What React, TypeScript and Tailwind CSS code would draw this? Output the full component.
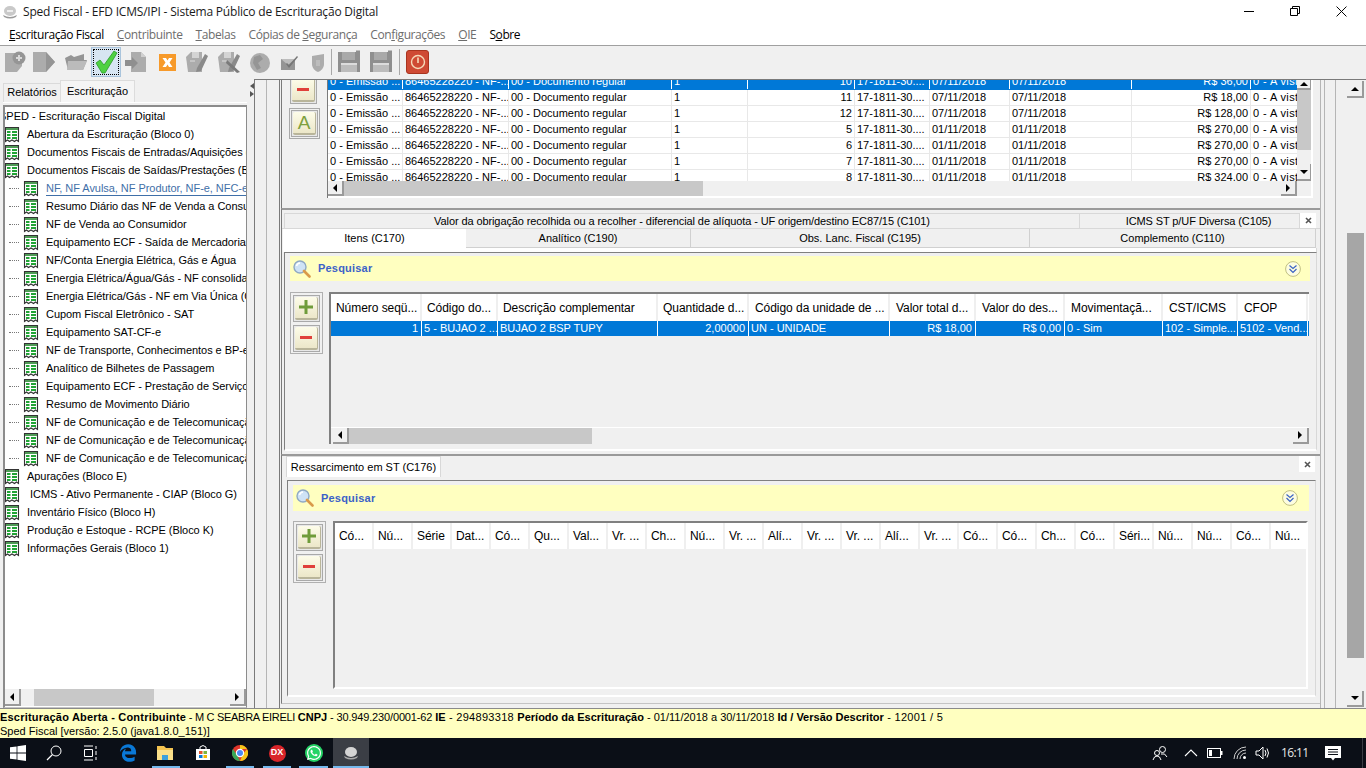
import React from "react";
import { FaEdgeLegacy, FaWhatsapp } from "react-icons/fa6";

const Tri = ({ d }: { d: "l" | "r" | "u" | "d" }) => {
  const p = { l: "M5 0 L5 8 L1 4 Z", r: "M1 0 L1 8 L5 4 Z", u: "M0 5 L8 5 L4 1 Z", d: "M0 1 L8 1 L4 5 Z" }[d];
  const s = d === "l" || d === "r" ? "w-[6px] h-[8px]" : "w-[8px] h-[6px]";
  return (
    <svg viewBox={d === "l" || d === "r" ? "0 0 6 8" : "0 0 8 6"} className={s}>
      <path d={p} fill="#000" />
    </svg>
  );
};

const SBtn = ({ d, cls = "" }: { d: "l" | "r" | "u" | "d"; cls?: string }) => (
  <div className={`flex items-center justify-center bg-[#f0f0f0] border-b-2 border-r-2 border-[#9a9a9a] shrink-0 ${cls}`}>
    <Tri d={d} />
  </div>
);

const HScroll = ({ thumbLeft, thumbW, cls = "" }: { thumbLeft: string; thumbW: string; cls?: string }) => (
  <div className={`flex bg-[#f0f0f0] ${cls}`}>
    <SBtn d="l" cls="w-[16px] h-full" />
    <div className="flex-1 flex">
      <div className={thumbLeft} />
      <div className={`${thumbW} bg-[#c8c8c8]`} />
    </div>
    <SBtn d="r" cls="w-[16px] h-full" />
  </div>
);

const TreeIcon = () => (
  <svg viewBox="0 0 16 17" className="w-[16px] h-[17px] shrink-0">
    <path d="M1.5 1.5 H14.5 V15.5 L12.5 14 L10.5 15.5 L8 14 L5.5 15.5 L3.5 14 L1.5 15.5 Z" fill="#fff" stroke="#333" strokeWidth="1.1" />
    <path d="M2 2 H14 V4 H2 Z" fill="#4f9a56" />
    <path d="M3 5 H6.5 V7 H3 Z M8 5 H13 V7 H8 Z M3 8 H6.5 V10 H3 Z M8 8 H13 V10 H8 Z M3 11 H6.5 V13 H3 Z M8 11 H13 V13 H8 Z" fill="#22a336" />
  </svg>
);

const L1 = ({ t, x = "ml-[7px]" }: { t: string; x?: string }) => (
  <div className="h-[18px] flex items-center whitespace-nowrap tracking-[-0.05px]">
    <div className="-ml-[1px]">
      <TreeIcon />
    </div>
    <span className={x}>{t}</span>
  </div>
);

const L2 = ({ t, link }: { t: string; link?: boolean }) => (
  <div className="h-[18px] flex items-center whitespace-nowrap pl-[4px] tracking-[-0.05px]">
    <div className="w-[10px] border-t border-dotted border-[#777] mr-[4px] shrink-0" />
    <TreeIcon />
    <span className={link ? "ml-[7px] text-[#3f6fa8] border-b border-[#3f6fa8] pr-[40px] leading-[14px]" : "ml-[7px]"}>{t}</span>
  </div>
);

const Gray = ({ children }: { children: React.ReactNode }) => (
  <svg viewBox="0 0 24 24" className="w-[24px] h-[24px]">
    {children}
  </svg>
);

const G = "#acacac";
const GD = "#959595";

const Floppy = () => (
  <Gray>
    <path d="M1 2 H19 V0.5 H23 V22 H1 Z" fill="#8f8f8f" />
    <path d="M5 2 H18 V10 H5 Z" fill="#a9a9a9" />
    <path d="M4 13 H20 V22 H4 Z" fill="#bcbcbc" />
    <path d="M4 13 H20 V15 H4 Z" fill="#dcdcdc" />
  </Gray>
);

const SavePen = ({ x }: { x?: boolean }) => (
  <Gray>
    <path d="M1 7 L6 2 H17 V22 H3 Z" fill={G} />
    <path d="M7 2 H14 V8 H7 Z" fill="#d4d4d4" />
    <path d="M5 11 L10 11" stroke="#ddd" />
    <path d="M12 18 L20 4 L23 6 L16 21 L11 22 Z" fill="#8a8a8a" />
    {x && <path d="M10 10 L23 22 L20 23 L9 13 Z" fill="#7a7a7a" />}
  </Gray>
);

const tools: { k: string; w: string; el: React.ReactNode }[] = [
  { k: "a", w: "w-[28px]", el: <Gray><path d="M3 3 H14 L20 9 V16 L15 22 H3 Z" fill={G} /><circle cx="17" cy="8" r="6.5" fill={GD} /><path d="M14 7 H16 V5 H18 V7 H20 V9 H18 V11 H16 V9 H14 Z" fill="#d8d8d8" /></Gray> },
  { k: "b", w: "w-[32px]", el: <Gray><path d="M1 2 H14 L23 12 L14 22 H1 Z" fill={G} /><path d="M14 2 L23 12 L14 22 Z" fill={GD} /></Gray> },
  { k: "c", w: "w-[31px]", el: <Gray><path d="M1 8 L7 5 L10 7 L20 4 V10 H23 L19 20 H4 Z" fill={GD} /><path d="M4 11 H23 L19 20 H3 Z" fill="#bbb" /></Gray> },
  { k: "d", w: "w-[30px]", el: <Gray><path d="M2 13 L6 10 L10 15 L20 1 L23 3 L11 23 H8 Z" fill="#4fd142" stroke="#2b9c28" strokeWidth="0.8" /></Gray> },
  { k: "e", w: "w-[30px]", el: <Gray><path d="M7 2 H17 L22 7 V22 H7 Z" fill={G} /><path d="M17 2 L22 7 H17 Z" fill="#d0d0d0" /><path d="M1 10 H8 V7 L14 13 L8 19 V16 H1 Z" fill="#8f8f8f" /></Gray> },
  { k: "f", w: "w-[31px]", el: <Gray><rect x="4" y="4" width="17" height="17" fill="#f79a2a" /><path d="M7.5 8 L11 8 L12.5 10.5 L14 8 L17.5 8 L14.5 12.5 L17.5 17 L14 17 L12.5 14.5 L11 17 L7.5 17 L10.5 12.5 Z" fill="#fff" /></Gray> },
  { k: "g", w: "w-[30px]", el: <SavePen /> },
  { k: "h", w: "w-[33px]", el: <SavePen x /> },
  { k: "i", w: "w-[29px]", el: <Gray><circle cx="12" cy="13" r="10" fill={G} /><path d="M6 7 L12 5 L15 9 L10 13 L13 18 L9 20 L5 13 Z" fill={GD} /></Gray> },
  { k: "j", w: "w-[29px]", el: <Gray><path d="M4 9 H18 V20 H4 Z" fill={GD} /><path d="M4 9 L11 15 L18 9" fill="#bdbdbd" /><path d="M10 13 L12 15 L20 6 L21 7 L12 18 L9 14 Z" fill="#777" /></Gray> },
  { k: "k", w: "w-[30px]", el: <Gray><path d="M6 6 L18 4 V14 C18 18 15 21 12 22 C9 21 6 18 6 14 Z" fill={G} /><path d="M10 10 H14 V16 H10 Z" fill="#bcbcbc" /></Gray> },
];

const IconBtn = ({ kind }: { kind: "+" | "-" | "A" }) => (
  <div className="w-[27px] h-[27px] border border-[#a9a9a9] p-[1px] bg-[#e8e8e8]">
    <div className="w-full h-full rounded-[2px] bg-gradient-to-b from-[#fdfce9] to-[#ece7c9] border-b-2 border-r border-[#b9b59a] flex items-center justify-center">
      {kind === "+" && (
        <svg viewBox="0 0 14 14" className="w-[14px] h-[14px]"><path d="M5.5 0 H8.5 V5.5 H14 V8.5 H8.5 V14 H5.5 V8.5 H0 V5.5 H5.5 Z" fill="#6f9c3a" /></svg>
      )}
      {kind === "-" && (
        <svg viewBox="0 0 12 3" className="w-[12px] h-[3px]"><rect width="12" height="3" fill="#e0403a" /></svg>
      )}
      {kind === "A" && <span className="text-[19px] leading-none text-[#7ea03f]">A</span>}
    </div>
  </div>
);

const Magnifier = () => (
  <svg viewBox="0 0 18 18" className="w-[18px] h-[18px] shrink-0">
    <circle cx="7" cy="7" r="6" fill="#cfe3f6" stroke="#8fa9c4" strokeWidth="1.4" />
    <path d="M3.5 6 A4 4 0 0 1 7 3" stroke="#fff" strokeWidth="1.5" fill="none" />
    <path d="M11 11 L16.5 16.5" stroke="#d99a4a" strokeWidth="2.6" strokeLinecap="round" />
  </svg>
);

const DoubleDown = () => (
  <svg viewBox="0 0 16 16" className="w-[16px] h-[16px] shrink-0">
    <circle cx="8" cy="8" r="7.4" fill="#fdfde0" stroke="#b9b878" strokeWidth="0.9" />
    <path d="M4.5 4.5 L8 7.5 L11.5 4.5 M4.5 8 L8 11.5 L11.5 8" fill="none" stroke="#3a62c4" strokeWidth="1.2" />
  </svg>
);

const SearchBar = ({ cls, gap }: { cls: string; gap: string }) => (
  <div className={`bg-[#ffffc0] flex items-center justify-between ${cls}`}>
    <div className={`flex items-center ${gap}`}>
      <Magnifier />
      <span className="font-bold text-[#3c62c8] text-[11px] tracking-[0.2px]">Pesquisar</span>
    </div>
    <DoubleDown />
  </div>
);

const topGrid = "grid grid-cols-[75px_106px_163px_76px_107px_75px_80px_122px_119px_46px]";
const topRows = [
  ["10", "07/11/2018", "R$ 36,00"],
  ["11", "07/11/2018", "R$ 18,00"],
  ["12", "07/11/2018", "R$ 128,00"],
  ["5", "01/11/2018", "R$ 270,00"],
  ["6", "01/11/2018", "R$ 270,00"],
  ["7", "01/11/2018", "R$ 270,00"],
  ["8", "01/11/2018", "R$ 324,00"],
];

const cellB = "border-r border-[#e8e8e8] overflow-hidden whitespace-nowrap px-[2px]";
const cellS = "border-r border-white overflow-hidden whitespace-nowrap px-[2px]";

const TopRow = ({ r, sel }: { r: string[]; sel?: boolean }) => {
  const c = sel ? cellS : cellB;
  return (
    <div className={`${topGrid} h-[16px] leading-[15px] border-b ${sel ? "bg-[#0078d7] text-white border-[#0078d7]" : "bg-white text-black border-[#e8e8e8]"}`}>
      <div className={c}>0 - Emissão ...</div>
      <div className={c}>86465228220 - NF-...</div>
      <div className={c}>00 - Documento regular</div>
      <div className={c}>1</div>
      <div className={`${c} text-right`}>{r[0]}</div>
      <div className={c}>17-1811-30....</div>
      <div className={c}>{r[1]}</div>
      <div className={c}>{r[1]}</div>
      <div className={`${c} text-right`}>{r[2]}</div>
      <div className="overflow-hidden whitespace-nowrap px-[2px] tracking-[0.4px]">0 - A vista</div>
    </div>
  );
};

const midGrid = "grid grid-cols-[91px_76px_160px_91px_141px_86px_89px_98px_75px_70px]";
const midHead = ["Número seqü...", "Código do...", "Descrição complementar", "Quantidade d...", "Código da unidade de ...", "Valor total d...", "Valor do des...", "Movimentaçã...", "CST/ICMS", "CFOP"];
const midRow: [string, boolean][] = [["1", true], ["5 - BUJAO 2 ...", false], ["BUJAO 2 BSP TUPY", false], ["2,00000", true], ["UN - UNIDADE", false], ["R$ 18,00", true], ["R$ 0,00", true], ["0 - Sim", false], ["102 - Simple...", false], ["5102 - Vend...", false]];

const lowHead = ["Có...", "Nú...", "Série", "Dat...", "Có...", "Qu...", "Val...", "Vr. ...", "Ch...", "Nú...", "Vr. ...", "Alí...", "Vr. ...", "Vr. ...", "Alí...", "Vr. ...", "Có...", "Có...", "Ch...", "Có...", "Séri...", "Nú...", "Nú...", "Có...", "Nú..."];

const Tab = ({ t, cls }: { t: string; cls: string }) => (
  <div className={`flex items-center justify-center whitespace-nowrap ${cls}`}>{t}</div>
);

const CloseBox = ({ cls }: { cls: string }) => (
  <div className={`bg-white flex items-center justify-center ${cls}`}>
    <svg viewBox="0 0 7 7" className="w-[7px] h-[7px]"><path d="M1 1 L6 6 M6 1 L1 6" stroke="#555" strokeWidth="1.6" /></svg>
  </div>
);

const trayIcon = "stroke-white fill-none";

export default function App() {
  return (
    <div className="w-[1366px] h-[768px] overflow-hidden bg-[#f0f0f0] text-black text-[11px] font-['Liberation_Sans',Arial,sans-serif] flex flex-col">
      {/* Title */}
      <div className="h-[22px] bg-white flex items-center shrink-0">
        <svg viewBox="0 0 16 16" className="w-[16px] h-[16px] ml-[2px] mt-[1px]">
          <ellipse cx="8" cy="7" rx="6" ry="5" fill="#c9c9c9" />
          <path d="M1 11 Q8 15 15 11 L14 13 Q8 16 2 13 Z" fill="#9a9a9a" />
          <rect x="5" y="6" width="6" height="2" fill="#eee" />
        </svg>
        <span className="ml-[5px] mt-[2px] text-[12px] font-['Open_Sans',sans-serif] tracking-[-0.2px] text-[#1a1a1a]">Sped Fiscal - EFD ICMS/IPI - Sistema Público de Escrituração Digital</span>
        <div className="ml-auto flex items-center mr-[2px]">
          <div className="w-[46px] flex justify-center"><div className="w-[10px] h-[1px] bg-black" /></div>
          <div className="w-[46px] flex justify-center">
            <svg viewBox="0 0 10 10" className="w-[10px] h-[10px]"><path d="M2.5 2.5 V0.5 H9.5 V7.5 H7.5 M0.5 2.5 H7.5 V9.5 H0.5 Z" fill="none" stroke="#000" /></svg>
          </div>
          <div className="w-[46px] flex justify-center">
            <svg viewBox="0 0 10 10" className="w-[11px] h-[11px]"><path d="M0.5 0.5 L9.5 9.5 M9.5 0.5 L0.5 9.5" stroke="#000" strokeWidth="0.9" /></svg>
          </div>
        </div>
      </div>
      {/* Menu */}
      <div className="h-[24px] bg-white border-b border-[#a0a0a0] flex items-center pl-[9px] gap-[13px] text-[12px] font-['Open_Sans',sans-serif] tracking-[-0.4px] shrink-0 pt-[2px]">
        <span className="text-black"><u>E</u>scrituração Fiscal</span>
        <span className="text-[#6d6d6d]"><u>C</u>ontribuinte</span>
        <span className="text-[#6d6d6d]"><u>T</u>abelas</span>
        <span className="text-[#6d6d6d]">Cópias de <u>S</u>egurança</span>
        <span className="text-[#6d6d6d]">Con<u>f</u>igurações</span>
        <span className="text-[#6d6d6d]"><u>O</u>IE</span>
        <span className="text-black">S<u>o</u>bre</span>
      </div>
      {/* Toolbar */}
      <div className="h-[32px] bg-[#f0f0f0] flex items-center shrink-0">
        {tools.map((t) =>
          t.k === "d" ? (
            <div key={t.k} className={`${t.w} h-[30px] bg-[#d7e5f2] border border-[#a9c4dc] flex items-center justify-center outline-1 outline-dotted outline-black -outline-offset-3`}>{t.el}</div>
          ) : (
            <div key={t.k} className={`${t.w} h-[30px] flex items-center justify-center`}>{t.el}</div>
          )
        )}
        <div className="w-[1px] h-[26px] bg-[#a8a8a8] -ml-[2px] mr-[1px]" />
        <div className="w-[32px] flex justify-center"><Floppy /></div>
        <div className="w-[31px] flex justify-center"><Floppy /></div>
        <div className="w-[1px] h-[26px] bg-[#a8a8a8] ml-[3px] mr-[6px]" />
        <div className="w-[23px] h-[24px] rounded-[3px] bg-[#cf4a34] border border-[#a8341f] flex items-center justify-center">
          <svg viewBox="0 0 16 16" className="w-[16px] h-[16px]"><circle cx="8" cy="8" r="6.5" fill="none" stroke="#f6d9b8" strokeWidth="1.4" /><path d="M8 3.5 V9" stroke="#f6d9b8" strokeWidth="1.6" /></svg>
        </div>
      </div>
      {/* Main */}
      <div className="h-[631px] flex shrink-0 border-b border-[#8a8a8a]">
        {/* Left panel */}
        <div className="w-[250px] shrink-0 flex flex-col pl-[3px] pr-[3px] pt-[2px]">
          <div className="h-[22px] flex items-end shrink-0">
            <div className="w-[57px] h-[19px] bg-[#f0f0f0] border-t border-l border-[#dadada] flex items-center justify-center pb-[2px]">Relatórios</div>
            <div className="w-[75px] h-[22px] bg-[#f5f5f5] border-t border-x border-[#dcdcdc] flex items-center justify-center">Escrituração</div>
          </div>
          <div className="h-[3px] shrink-0 border-t border-white" />
          <div className="flex-1 border-t-2 border-l-2 border-[#8c8c8c] border-r border-r-[#8c8c8c] border-b border-b-[#c4c4c4] bg-white flex flex-col overflow-hidden">
            <div className="flex-1 overflow-hidden">
              <div className="h-[18px] flex items-center whitespace-nowrap -ml-[6px]">SPED - Escrituração Fiscal Digital</div>
              <L1 t="Abertura da Escrituração (Bloco 0)" />
              <L1 t="Documentos Fiscais de Entradas/Aquisições (Bloco C)" />
              <L1 t="Documentos Fiscais de Saídas/Prestações (Bloco C)" />
              <L2 link t="NF, NF Avulsa, NF Produtor, NF-e, NFC-e (C100)" />
              <L2 t="Resumo Diário das NF de Venda a Consumidor" />
              <L2 t="NF de Venda ao Consumidor" />
              <L2 t="Equipamento ECF - Saída de Mercadorias" />
              <L2 t="NF/Conta Energia Elétrica, Gás e Água" />
              <L2 t="Energia Elétrica/Água/Gás - NF consolidada" />
              <L2 t="Energia Elétrica/Gás - NF em Via Única (C500)" />
              <L2 t="Cupom Fiscal Eletrônico - SAT" />
              <L2 t="Equipamento SAT-CF-e" />
              <L2 t="NF de Transporte, Conhecimentos e BP-e" />
              <L2 t="Analítico de Bilhetes de Passagem" />
              <L2 t="Equipamento ECF - Prestação de Serviços" />
              <L2 t="Resumo de Movimento Diário" />
              <L2 t="NF de Comunicação e de Telecomunicação" />
              <L2 t="NF de Comunicação e de Telecomunicação" />
              <L2 t="NF de Comunicação e de Telecomunicação" />
              <L1 t="Apurações (Bloco E)" />
              <L1 t="ICMS - Ativo Permanente - CIAP (Bloco G)" x="ml-[10px]" />
              <L1 t="Inventário Físico (Bloco H)" />
              <L1 t="Produção e Estoque - RCPE (Bloco K)" />
              <L1 t="Informações Gerais (Bloco 1)" />
            </div>
            <HScroll cls="h-[17px] shrink-0 mb-[1px]" thumbLeft="w-[13px]" thumbW="w-[120px]" />
          </div>
        </div>
        {/* Splitter */}
        <div className="w-[4px] shrink-0 flex flex-col items-center pt-[5px] gap-[2px]">
          <svg viewBox="0 0 4 6" className="w-[4px] h-[6px]"><path d="M4 0 V6 L0 3 Z" fill="#555" /></svg>
          <svg viewBox="0 0 4 6" className="w-[4px] h-[6px]"><path d="M0 0 V6 L4 3 Z" fill="#555" /></svg>
        </div>
        {/* Right */}
        <div className="flex-1 flex mt-[1px] border-t border-[#7a7a7a] min-w-0">
          <div className="w-[12px] shrink-0 border-l border-[#7a7a7a]" />
          <div className="w-[13px] shrink-0 border-l border-[#b5b5b5]" />
          {/* Content */}
          <div className="w-[1042px] shrink-0 border-l border-[#7a7a7a] border-r border-r-[#b5b5b5] pl-[1px] flex flex-col">
            {/* Panel A */}
            <div className="h-[128px] shrink-0 border-l border-[#7a7a7a] overflow-hidden flex pl-[8px]">
              <div className="w-[33px] shrink-0">
                <div className="-mt-[3px]"><IconBtn kind="-" /></div>
                <div className="mt-[4px] -ml-[1px]"><div className="w-[31px] h-[31px] border border-[#a9a9a9] p-[1px]"><IconBtn kind="A" /></div></div>
              </div>
              <div className="ml-[4px] w-[986px] shrink-0 h-[118px] border-l border-[#7a7a7a] border-r-2 border-r-white flex flex-col bg-white">
                <div className="h-[101px] flex overflow-hidden">
                  <div className="w-[969px] overflow-hidden shrink-0 bg-white">
                    <div className="-mt-[6px]">
                      {topRows.map((r, i) => (
                        <TopRow key={i} r={r} sel={i === 0} />
                      ))}
                    </div>
                  </div>
                  <div className="w-[15px] flex flex-col bg-[#f0f0f0] shrink-0">
                    <SBtn d="u" cls="h-[10px] w-full" />
                    <div className="h-[60px] bg-[#c8c8c8] shrink-0" />
                    <div className="flex-1" />
                    <SBtn d="d" cls="h-[17px] w-full" />
                  </div>
                </div>
                <div className="flex h-[15px] shrink-0 bg-[#f0f0f0]">
                  <HScroll cls="w-[969px] h-full" thumbLeft="w-0" thumbW="w-[359px]" />
                </div>
              </div>
            </div>
            {/* Panel B */}
            <div className="h-[246px] shrink-0 border-t-2 border-[#9a9a9a] border-l border-l-[#7a7a7a] flex flex-col">
              <div className="h-[15px] mt-[3px] shrink-0 flex pl-[2px] tracking-[-0.1px]">
                <Tab t="Valor da obrigação recolhida ou a recolher - diferencial de alíquota - UF origem/destino EC87/15 (C101)" cls="w-[796px] border-t border-x border-[#d8d8d8]" />
                <Tab t="ICMS ST p/UF Diversa (C105)" cls="w-[220px] border-t border-r border-[#d8d8d8] pl-[18px]" />
                <CloseBox cls="w-[16px] h-[15px]" />
              </div>
              <div className="h-[20px] shrink-0 flex pl-[1px] border-t border-[#d8d8d8]">
                <Tab t="Itens (C170)" cls="w-[183px] bg-white" />
                <Tab t="Analítico (C190)" cls="w-[225px] border-r border-b border-[#d0d0d0]" />
                <Tab t="Obs. Lanc. Fiscal (C195)" cls="w-[339px] border-r border-b border-[#d0d0d0]" />
                <Tab t="Complemento (C110)" cls="w-[286px] border-r border-b border-[#d0d0d0]" />
              </div>
              <div className="h-[4px] shrink-0 ml-[1px] w-[1034px] border-r border-[#d8d8d8] bg-white" />
              <div className="ml-[2px] mb-[3px] w-[1033px] flex-1 border-t border-l border-[#808080] border-r border-r-[#d8d8d8] border-b-2 border-b-white flex flex-col min-h-0 pl-[5px] pr-[6px] pt-[3px]">
                <SearchBar cls="h-[25px] shrink-0 pl-[3px] pr-[9px]" gap="gap-[7px]" />
                <div className="flex mt-[11px] flex-1 min-h-0">
                  <div className="w-[33px] h-[62px] border border-[#b0b0b0] flex flex-col items-center justify-center gap-[3px] shrink-0">
                    <IconBtn kind="+" />
                    <IconBtn kind="-" />
                  </div>
                  <div className="ml-[6px] w-[980px] h-[152px] border-t-2 border-l-2 border-[#808080] flex flex-col">
                    <div className={`${midGrid} h-[27px] bg-white shrink-0`}>
                      {midHead.map((h, i) => (
                        <div key={i} className={`flex items-center border-r-2 border-[#efefef] whitespace-nowrap overflow-hidden text-[12px] tracking-[-0.05px] ${i < 4 ? "pl-[5px]" : "pl-[6px]"}`}>{h}</div>
                      ))}
                    </div>
                    <div className={`${midGrid} h-[15px] bg-[#0078d7] text-white leading-[14px] shrink-0`}>
                      {midRow.map(([v, right], i) => (
                        <div key={i} className={`border-r border-white whitespace-nowrap overflow-hidden ${right ? "text-right pl-[2px] pr-[3px]" : "px-[2px]"}`}>{v}</div>
                      ))}
                    </div>
                    <div className="flex-1" />
                    <div className="border-t border-white h-[17px] shrink-0">
                      <HScroll cls="h-full pl-[2px]" thumbLeft="w-0" thumbW="w-[243px]" />
                    </div>
                  </div>
                </div>
              </div>
            </div>
            {/* Panel C */}
            <div className="flex-1 min-h-0 mb-[4px] border-t-2 border-[#9a9a9a] border-l border-l-[#7a7a7a] border-b border-b-[#c4c4c4] flex flex-col">
              <div className="h-[24px] shrink-0 flex items-start pl-[4px]">
                <div className="w-[155px] h-[21px] bg-white border-t border-x border-[#d8d8d8] flex items-center justify-center">Ressarcimento em ST (C176)</div>
                <CloseBox cls="w-[16px] h-[16px] ml-auto mr-[5px]" />
              </div>
              <div className="ml-[5px] mb-[6px] w-[1029px] flex-1 min-h-0 border-t border-l border-[#808080] border-r border-r-[#d8d8d8] border-b-2 border-b-white pl-[5px] pr-[6px] pt-[4px] flex flex-col">
                <SearchBar cls="h-[26px] shrink-0 pl-[3px] pr-[11px]" gap="gap-[7px]" />
                <div className="flex mt-[10px] flex-1 min-h-0">
                  <div className="w-[33px] h-[62px] border border-[#b0b0b0] flex flex-col items-center justify-center gap-[3px] shrink-0">
                    <IconBtn kind="+" />
                    <IconBtn kind="-" />
                  </div>
                  <div className="ml-[7px] w-[975px] h-[168px] border-t-2 border-l-2 border-[#808080] border-b-2 border-b-white border-r-2 border-r-white flex flex-col overflow-hidden">
                    <div className="grid grid-cols-[repeat(25,39px)] h-[26px] bg-white shrink-0 overflow-hidden">
                      {lowHead.map((h, i) => (
                        <div key={i} className="flex items-center border-r-2 border-[#efefef] pl-[4px] whitespace-nowrap overflow-hidden text-[12px] tracking-[-0.05px]">{h}</div>
                      ))}
                    </div>
                  </div>
                </div>
              </div>
            </div>
          </div>
          <div className="w-[4px] shrink-0 border-r border-[#b5b5b5]" />
          <div className="w-[11px] shrink-0 border-r border-[#b5b5b5]" />
          <div className="w-[11px] shrink-0" />
          {/* Main scrollbar */}
          <div className="w-[17px] shrink-0 flex flex-col pb-[1px]">
            <div className="h-[1px]" />
            <SBtn d="u" cls="h-[17px] w-[17px]" />
            <div className="h-[135px]" />
            <div className="h-[425px] bg-[#a6a6a6] shrink-0" />
            <div className="flex-1" />
            <SBtn d="d" cls="h-[16px] w-[17px]" />
          </div>
          <div className="w-[2px]" />
        </div>
      </div>
      {/* Status */}
      <div className="h-[29px] bg-[#ffffc0] shrink-0 text-[11px] leading-[14px] pt-[1px] whitespace-nowrap">
        <div>
          <b className="tracking-[0.2px]">Escrituração Aberta - Contribuinte</b>
          <span className="tracking-[-0.3px]"> - M C SEABRA EIRELI </span>
          <b>CNPJ</b>
          <span className="tracking-[-0.15px]"> - 30.949.230/0001-62 </span>
          <b>IE</b>
          <span className="tracking-[0.3px]"> - 294893318 </span>
          <b>Período da Escrituração</b> - 01/11/2018 a 30/11/2018 <b>Id / Versão Descritor</b>
          <span className="tracking-[0.3px]"> - 12001 / 5</span>
        </div>
        <div>Sped Fiscal [versão: 2.5.0 (java1.8.0_151)]</div>
      </div>
      {/* Taskbar */}
      <div className="h-[30px] bg-[#0b0f17] flex items-center shrink-0 text-white">
        <div className="w-[36px] flex justify-center">
          <svg viewBox="0 0 16 16" className="w-[16px] h-[16px]"><path d="M0 2.3 L6.6 1.4 V7.6 H0 Z M7.4 1.3 L16 0 V7.6 H7.4 Z M0 8.4 H6.6 V14.6 L0 13.7 Z M7.4 8.4 H16 V16 L7.4 14.7 Z" fill="#fff" /></svg>
        </div>
        <div className="w-[36px] flex justify-center">
          <svg viewBox="0 0 16 16" className="w-[16px] h-[16px]"><circle cx="10" cy="6" r="5" className={trayIcon} /><path d="M6.5 9.5 L1 15" className={trayIcon} strokeWidth="1.3" /></svg>
        </div>
        <div className="w-[36px] flex justify-center">
          <svg viewBox="0 0 16 16" className="w-[16px] h-[16px]"><path d="M2 1 H11 M2.5 4.5 H10.5 V11.5 H2.5 Z M2 15 H11 M14 1 V4 M14 6 V10 M14 12 V15" className={trayIcon} /></svg>
        </div>
        <div className="w-[38px] flex justify-center ml-[1px]"><FaEdgeLegacy className="w-[18px] h-[18px] text-[#0a78d7]" /></div>
        <div className="w-[38px] flex justify-center h-full relative">
          <svg viewBox="0 0 18 16" className="w-[18px] h-[16px] self-center"><path d="M0 1 H7 L9 3 H16 V15 H0 Z" fill="#f5c451" /><path d="M0 5 H16 V15 H0 Z" fill="#fbe08a" /><path d="M5 10 H11 V15 H5 Z" fill="#3da0dc" /></svg>
          <div className="absolute bottom-0 inset-x-[5px] h-[2px] bg-[#76b9ed]" />
        </div>
        <div className="w-[36px] flex justify-center">
          <svg viewBox="0 0 16 16" className="w-[16px] h-[16px]"><path d="M1 4 H15 V15 H1 Z" fill="#fff" /><path d="M5 4 V2 Q8 -1 11 2 V4" fill="none" stroke="#fff" /><rect x="4" y="6" width="3.5" height="3" fill="#e2552c" /><rect x="8.5" y="6" width="3.5" height="3" fill="#7db640" /><rect x="4" y="10" width="3.5" height="3" fill="#0a78d7" /><rect x="8.5" y="10" width="3.5" height="3" fill="#f5b700" /></svg>
        </div>
        <div className="w-[38px] flex justify-center h-full relative">
          <svg viewBox="0 0 16 16" className="w-[16px] h-[16px] self-center"><circle cx="8" cy="8" r="8" fill="#e0352b" /><path d="M8 0 A8 8 0 0 1 15 4 H8 Z" fill="#f5c518" /><path d="M15 4 A8 8 0 0 1 8 16 L11 9 Z" fill="#f5c518" /><path d="M1 4 L5 10 L8 16 A8 8 0 0 1 1 4 Z" fill="#3aa757" /><circle cx="8" cy="8" r="3.6" fill="#4a8af4" stroke="#fff" strokeWidth="1.2" /></svg>
          <div className="absolute bottom-0 inset-x-[5px] h-[2px] bg-[#76b9ed]" />
        </div>
        <div className="w-[36px] flex justify-center h-full relative">
          <div className="w-[17px] h-[17px] self-center rounded-full bg-[#d9252a] text-white font-bold text-[9px] flex items-center justify-center">DX</div>
          <div className="absolute bottom-0 inset-x-[4px] h-[2px] bg-[#76b9ed]" />
        </div>
        <div className="w-[37px] flex justify-center h-full relative">
          <div className="w-[18px] h-[18px] self-center rounded-full bg-[#25d366] flex items-center justify-center"><FaWhatsapp className="w-[16px] h-[16px] text-white" /></div>
          <div className="absolute bottom-0 inset-x-[4px] h-[2px] bg-[#76b9ed]" />
        </div>
        <div className="w-[36px] h-full flex justify-center bg-[#3b3e45] relative ml-[1px]">
          <svg viewBox="0 0 16 16" className="w-[16px] h-[16px] self-center"><ellipse cx="8" cy="7" rx="6" ry="5" fill="#d4d4d4" /><path d="M1 11 Q8 15 15 11 L14 13 Q8 16 2 13 Z" fill="#aaa" /></svg>
          <div className="absolute bottom-0 inset-x-0 h-[2px] bg-[#76b9ed]" />
        </div>
        <div className="ml-auto flex items-center h-full">
          <svg viewBox="0 0 16 16" className="w-[16px] h-[16px] mr-[16px]"><circle cx="10.5" cy="4.5" r="3" className={trayIcon} /><circle cx="5" cy="8" r="2.5" className={trayIcon} /><path d="M1 15 Q2 11 5 11 Q8 11 9 15 M9 9 Q13 7.5 15 12" className={trayIcon} /></svg>
          <svg viewBox="0 0 14 8" className="w-[14px] h-[8px] mr-[9px]"><path d="M1 7 L7 1 L13 7" className={trayIcon} strokeWidth="1.1" /></svg>
          <svg viewBox="0 0 16 10" className="w-[16px] h-[10px] mr-[10px]"><rect x="0.5" y="0.5" width="13" height="9" className={trayIcon} /><rect x="2" y="2" width="3" height="6" fill="#fff" /><rect x="14" y="3" width="1.5" height="4" fill="#fff" /></svg>
          <svg viewBox="0 0 14 14" className="w-[14px] h-[14px] mr-[8px]"><path d="M1 13 A12 12 0 0 1 13 1 M4 13 A9 9 0 0 1 13 4 M7 13 A6 6 0 0 1 13 7" className="stroke-[#cfcfcf] fill-none" /><circle cx="11.5" cy="11.5" r="1.5" fill="#fff" /></svg>
          <svg viewBox="0 0 16 14" className="w-[16px] h-[14px] mr-[10px]"><path d="M1 5 H4 L8 1 V13 L4 9 H1 Z M10 4 Q12 7 10 10 M12 2.5 Q15 7 12 11.5" className={trayIcon} /></svg>
          <span className="text-[12px] text-[#e8e8e8] font-['Open_Sans',sans-serif] tracking-[-0.6px] w-[26px] mr-[18px]">16:11</span>
          <svg viewBox="0 0 16 16" className="w-[16px] h-[16px] mr-[21px]"><path d="M0 1 H16 V13 H10 L8 15.5 L6 13 H0 Z" fill="#fff" /><path d="M3 4.5 H13 M3 7 H13 M3 9.5 H13" stroke="#0b0f17" /></svg>
          <div className="w-[1px] h-full bg-[#3a3d44] mr-[3px]" />
        </div>
      </div>
    </div>
  );
}
